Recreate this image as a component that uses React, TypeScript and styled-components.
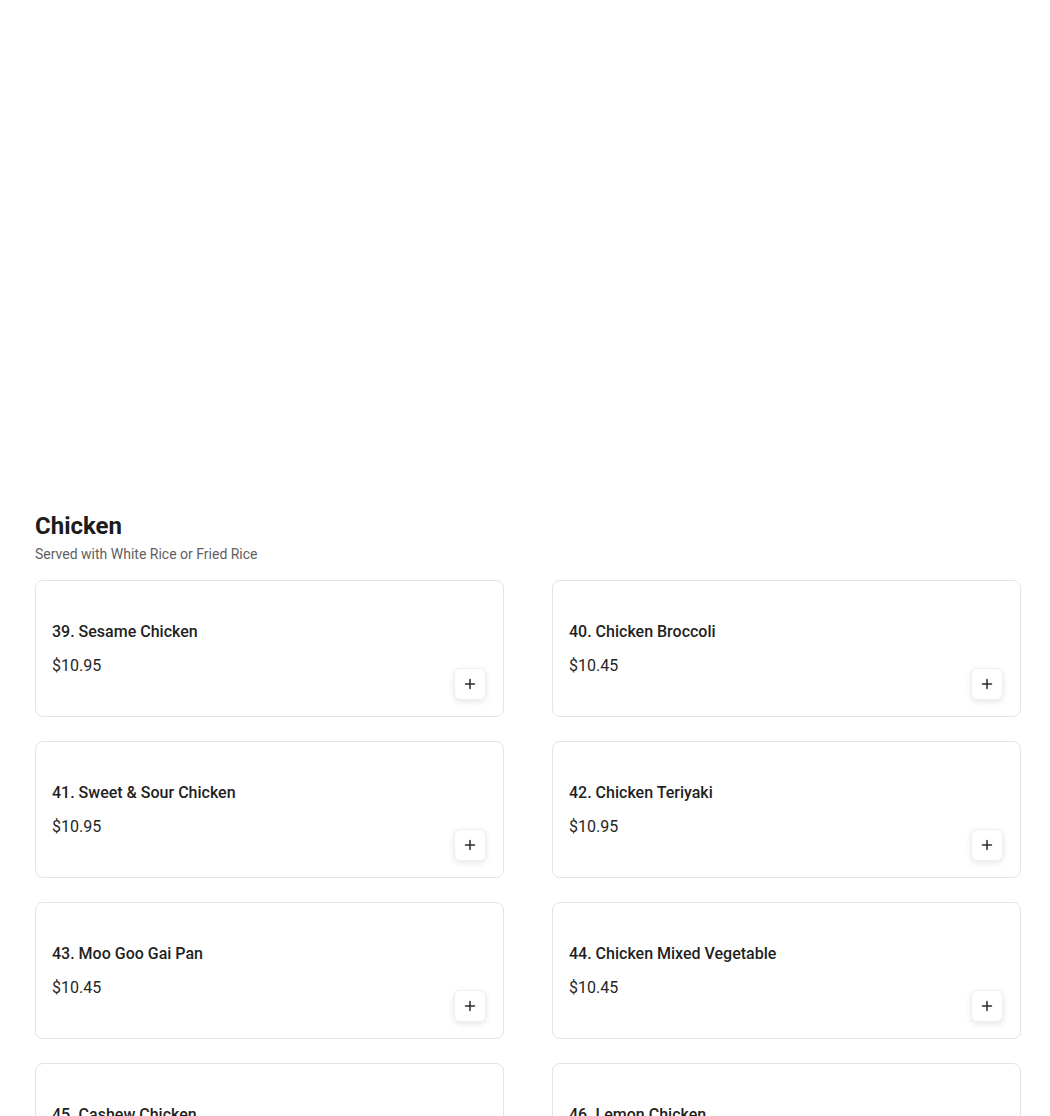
import React from "react";
import styled, { createGlobalStyle } from "styled-components";

const GlobalStyle = createGlobalStyle`
  body {
    margin: 0;
    background: #ffffff;
    font-family: Roboto, "Liberation Sans", Arial, sans-serif;
    color: #1f1f1f;
  }
  * { box-sizing: border-box; }
`;

const items = [
  { id: 39, name: "Sesame Chicken", price: "$10.95" },
  { id: 40, name: "Chicken Broccoli", price: "$10.45" },
  { id: 41, name: "Sweet & Sour Chicken", price: "$10.95" },
  { id: 42, name: "Chicken Teriyaki", price: "$10.95" },
  { id: 43, name: "Moo Goo Gai Pan", price: "$10.45" },
  { id: 44, name: "Chicken Mixed Vegetable", price: "$10.45" },
  { id: 45, name: "Cashew Chicken", price: "$10.95" },
  { id: 46, name: "Lemon Chicken", price: "$10.95" },
];

function App() {
  return (
    <>
      <GlobalStyle />
      <Page>
        <Section>
          <Header>
            <Title>Chicken</Title>
            <Subtitle>Served with White Rice or Fried Rice</Subtitle>
          </Header>
          <Grid>
            {items.map((item) => (
              <Card key={item.id}>
                <Info>
                  <ItemName>
                    {item.id}. {item.name}
                  </ItemName>
                  <Price>{item.price}</Price>
                </Info>
                <AddButton aria-label="Add">
                  <svg width="12" height="12" viewBox="0 0 12 12">
                    <path
                      d="M6 1.5v9M1.5 6h9"
                      stroke="#2b2b2b"
                      strokeWidth="1.5"
                      strokeLinecap="round"
                    />
                  </svg>
                </AddButton>
              </Card>
            ))}
          </Grid>
        </Section>
      </Page>
    </>
  );
}

export default App;

const Page = styled.main`
  height: 1116px;
  overflow: hidden;
  padding: 510px 29px 0 35px;
`;

const Section = styled.section`
  display: flex;
  flex-direction: column;
`;

const Header = styled.div`
  display: flex;
  flex-direction: column;
  margin-bottom: 16px;
`;

const Title = styled.h2`
  margin: 0;
  font-size: 24px;
  line-height: 32px;
  font-weight: 700;
  color: #1c1c1c;
`;

const Subtitle = styled.p`
  margin: 2px 0 0;
  font-size: 14px;
  line-height: 20px;
  color: #5f5f5f;
`;

const Grid = styled.div`
  display: grid;
  grid-template-columns: 1fr 1fr;
  column-gap: 48px;
  row-gap: 24px;
`;

const Card = styled.div`
  display: flex;
  align-items: flex-end;
  justify-content: space-between;
  height: 137px;
  padding: 41px 17px 16px 16px;
  border: 1px solid #e3e3e3;
  border-radius: 8px;
  background: #fff;
`;

const Info = styled.div`
  display: flex;
  flex-direction: column;
  gap: 14px;
  padding-bottom: 24px;
`;

const ItemName = styled.h3`
  margin: 0;
  font-size: 16px;
  line-height: 20px;
  font-weight: 500;
  color: #1f1f1f;
`;

const Price = styled.span`
  font-size: 16px;
  line-height: 20px;
  color: #262626;
`;

const AddButton = styled.button`
  display: flex;
  align-items: center;
  justify-content: center;
  width: 32px;
  height: 32px;
  padding: 0;
  border: 1px solid #efefef;
  border-radius: 6px;
  background: #fff;
  box-shadow: 0 2px 6px rgba(0, 0, 0, 0.1);
  cursor: pointer;
`;
